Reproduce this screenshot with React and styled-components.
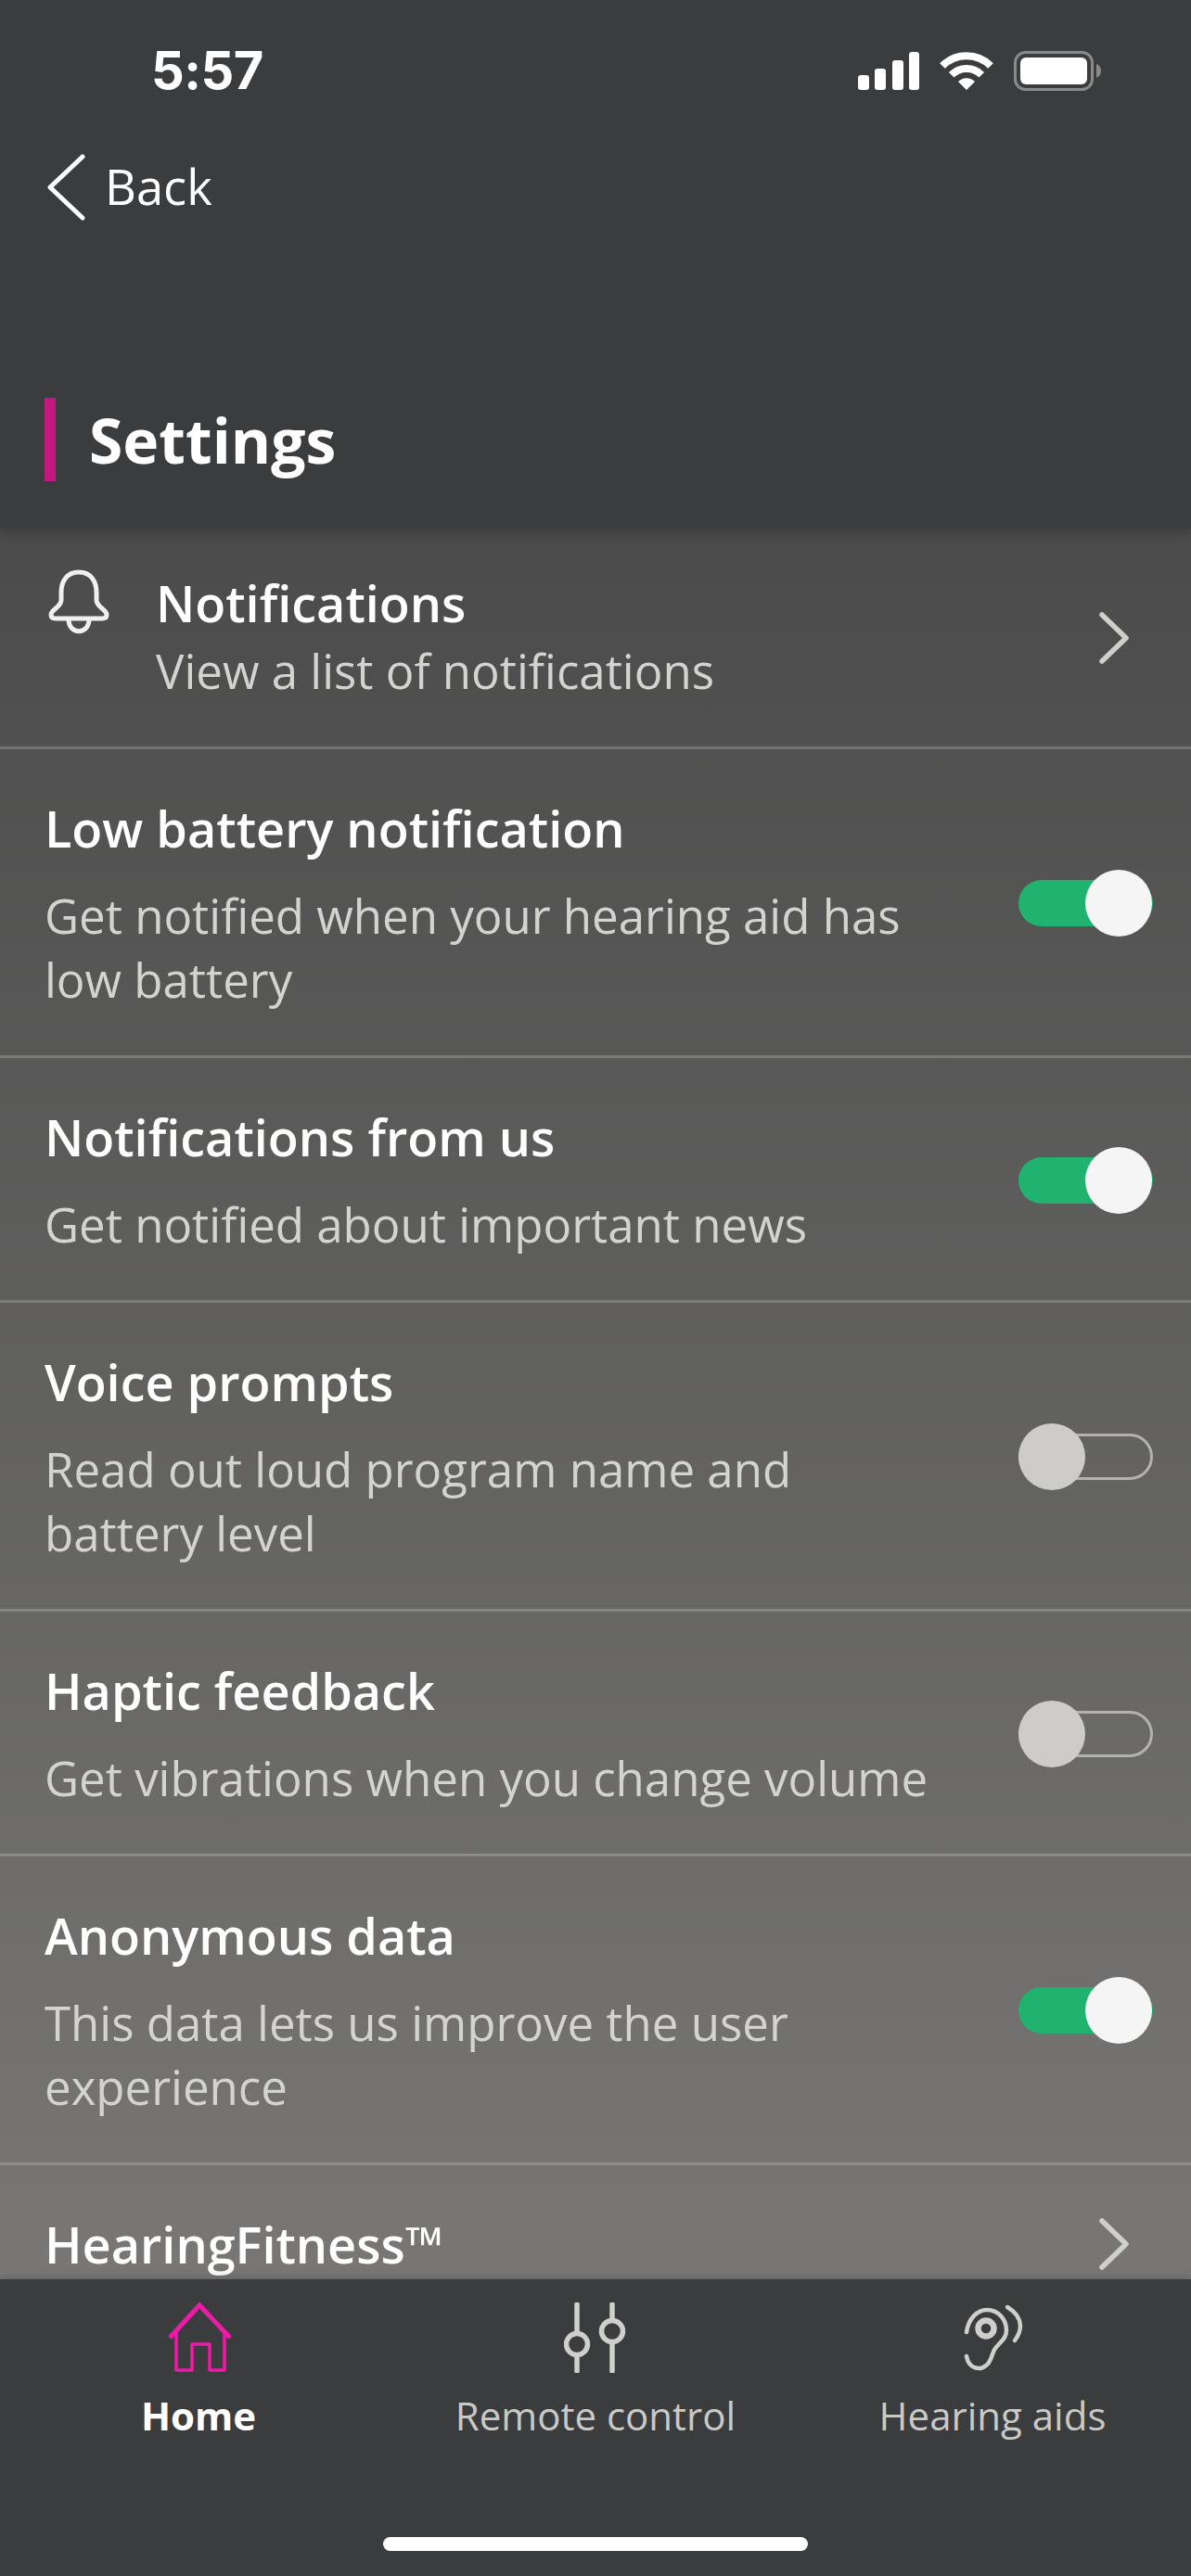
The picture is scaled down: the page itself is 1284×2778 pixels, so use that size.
import React from 'react'
import styled, { createGlobalStyle } from 'styled-components'

const Global = createGlobalStyle`
  html, body { margin: 0; padding: 0; background: #3b3c3e; }
  * { box-sizing: border-box; }
`

const Screen = styled.div`
  width: 1284px;
  height: 2778px;
  display: flex;
  flex-direction: column;
  overflow: hidden;
  font-family: "Open Sans", sans-serif;
  color: #fff;
  background: #3b3c3e;
`

const Header = styled.header`
  height: 570px;
  flex-shrink: 0;
  position: relative;
  z-index: 2;
  background: #3b3c3e;
  box-shadow: 0 3px 10px rgba(40, 40, 40, 0.45);
`

const StatusBar = styled.div`
  height: 152px;
  display: flex;
  align-items: center;
  justify-content: space-between;
  padding: 0 97px 0 163px;
`

const Time = styled.span`
  font-family: Inter, "Liberation Sans", sans-serif;
  font-weight: 700;
  font-size: 56px;
  letter-spacing: -0.5px;
`

const StatusIcons = styled.div`
  display: flex;
  align-items: center;
  gap: 22px;
  svg { display: block; }
`

const BackRow = styled.div`
  height: 100px;
  display: flex;
  align-items: center;
  gap: 21px;
  padding-left: 51px;
  font-size: 52.5px;
`

const BackLabel = styled.span`
  padding-bottom: 3px;
`

const TitleRow = styled.div`
  margin: 177px 0 0 48px;
  height: 90px;
  display: flex;
  align-items: center;
  padding-left: 36px;
  border-left: 12px solid #c4177f;
  font-size: 66px;
  font-weight: 700;
`

const List = styled.main`
  flex: 1;
  min-height: 0;
  overflow: hidden;
  background: linear-gradient(180deg, #4b4b4b 0%, #787775 100%);
`

const Row = styled.section`
  display: flex;
  align-items: center;
  padding: ${(p) => (p.$compact ? '48px 41px 47px 40px' : '53px 41px 47px 48px')};
  border-bottom: 3px solid rgba(255, 255, 255, 0.2);
`

const LeadIcon = styled.svg`
  flex-shrink: 0;
  align-self: flex-start;
  margin: -13px 38px 0 0;
`

const RowText = styled.div`
  flex: 1;
  min-width: 0;
`

const Title = styled.div`
  font-size: 54px;
  line-height: 64px;
  font-weight: 600;
  color: #fff;
`

const Sub = styled.div`
  max-width: 960px;
  margin-top: ${(p) => (p.$tight ? '7px' : '28px')};
  font-size: 51px;
  line-height: 69px;
  color: #d3d3d0;
`

const Chevron = styled.svg`
  flex-shrink: 0;
  margin-right: 26px;
`

const Track = styled.div`
  width: 145px;
  height: 50px;
  flex-shrink: 0;
  margin-bottom: 4px;
  display: flex;
  align-items: center;
  justify-content: ${(p) => (p.$on ? 'flex-end' : 'flex-start')};
  border-radius: 25px;
  background: ${(p) => (p.$on ? '#1fb36f' : 'transparent')};
  border: ${(p) => (p.$on ? 'none' : '3px solid #b3b2b0')};
`

const Knob = styled.div`
  width: 72px;
  height: 72px;
  flex-shrink: 0;
  border-radius: 50%;
  margin: ${(p) => (p.$on ? '0 1px 0 0' : '0 0 0 -3px')};
  background: ${(p) => (p.$on ? '#f5f5f5' : '#cdccc8')};
`

const TabBar = styled.nav`
  height: 320px;
  flex-shrink: 0;
  position: relative;
  z-index: 2;
  display: flex;
  flex-direction: column;
  background: #3b3c3e;
  box-shadow: 0 -2px 8px rgba(60, 60, 60, 0.35);
`

const Tabs = styled.div`
  display: grid;
  grid-template-columns: repeat(3, 1fr);
  padding-top: 24px;
`

const Tab = styled.div`
  display: flex;
  flex-direction: column;
  align-items: center;
  svg { display: block; flex-shrink: 0; }
`

const TabIconBox = styled.div`
  height: 78px;
  display: flex;
  align-items: center;
`

const TabLabel = styled.div`
  margin-top: 20px;
  font-size: 42px;
  line-height: 50px;
  font-weight: ${(p) => (p.$active ? 700 : 400)};
  color: ${(p) => (p.$active ? '#fff' : '#c9c9c6')};
`

const HomeBar = styled.div`
  width: 458px;
  height: 15px;
  margin: 106px auto 0;
  border-radius: 8px;
  background: #fff;
`

const Signal = () => (
  <svg width="66" height="41" viewBox="0 0 66 41" fill="#fff">
    <rect x="0" y="25" width="12" height="16" rx="3" />
    <rect x="18" y="18" width="12" height="23" rx="3" />
    <rect x="37" y="9" width="12" height="32" rx="3" />
    <rect x="55" y="0" width="11" height="41" rx="3" />
  </svg>
)

const Wifi = () => (
  <svg width="58" height="41" viewBox="0 0 58 41" fill="none" stroke="#fff" strokeWidth="8">
    <path d="M3 15 A37 37 0 0 1 55 15" />
    <path d="M12.7 24.7 A23 23 0 0 1 45.3 24.7" />
    <path d="M29 41 L20 32 A12.5 12.5 0 0 1 38 32 Z" fill="#fff" stroke="none" />
  </svg>
)

const Battery = () => (
  <svg width="94" height="43" viewBox="0 0 94 43">
    <rect x="1.5" y="1.5" width="83" height="40" rx="11" fill="none" stroke="#8a8a8a" strokeWidth="3" />
    <rect x="7" y="7" width="72" height="29" rx="6" fill="#fff" />
    <path d="M89 14 C92 15 94 18 94 21.5 C94 25 92 28 89 29 Z" fill="#8a8a8a" />
  </svg>
)

const BackArrow = () => (
  <svg width="41" height="72" viewBox="0 0 41 72" fill="none" stroke="#fff" strokeWidth="5" strokeLinecap="round" strokeLinejoin="round">
    <path d="M38 3 L3 36 L38 69" />
  </svg>
)

const Bell = () => (
  <LeadIcon width="90" height="90" viewBox="0 0 90 90" fill="none" stroke="#f0f0f0" strokeWidth="5" strokeLinejoin="round">
    <path d="M45 12 C32 12 26 22 26 34 V42 C26 50 15 52 15 58 C15 61 17 62 20 62 H70 C73 62 75 61 75 58 C75 52 64 50 64 42 V34 C64 22 58 12 45 12 Z" />
    <path d="M34 63 C34 80 56 80 56 63" />
  </LeadIcon>
)

const ChevronRight = () => (
  <Chevron width="32" height="56" viewBox="0 0 32 56" fill="none" stroke="#cfcfcc" strokeWidth="5.5" strokeLinecap="round" strokeLinejoin="round">
    <path d="M3 3 L29 28 L3 53" />
  </Chevron>
)

const HomeIcon = () => (
  <svg width="76" height="78" viewBox="0 0 76 78" fill="none" stroke="#ec1ba6">
    <path d="M7 39 L39 4 L72 39" strokeWidth="5" strokeLinejoin="miter" />
    <path d="M14 33 V74 H31 V46 H50 V74 H66 V33" strokeWidth="3.5" strokeLinejoin="round" />
  </svg>
)

const SlidersIcon = () => (
  <svg width="68" height="76" viewBox="0 0 68 76" fill="none" stroke="#cfcfcc" strokeWidth="5.5" strokeLinecap="round">
    <path d="M14 2 V31 M14 59 V74" />
    <circle cx="14" cy="45" r="11.5" />
    <path d="M52 2 V17 M52 45 V74" />
    <circle cx="52" cy="31" r="11.5" />
  </svg>
)

const EarIcon = () => (
  <svg width="80" height="90" viewBox="0 0 80 90" fill="none" stroke="#cfcfcc" strokeWidth="4.5" strokeLinecap="round">
    <path d="M12 39 C14 24 24 15 34 15 C46 15 55 25 55 37 C55 47 47 50 42 58 C39 64 38 72 33 75 C26 81 14 78 12 65" />
    <path d="M56 12 C66 18 70 26 70 32 C70 38 67 44 64 48" />
    <circle cx="33" cy="35" r="8.5" strokeWidth="6.5" />
  </svg>
)

const settings = [
  { title: 'Low battery notification', sub: 'Get notified when your hearing aid has low battery', on: true },
  { title: 'Notifications from us', sub: 'Get notified about important news', on: true },
  { title: 'Voice prompts', sub: 'Read out loud program name and battery level', on: false },
  { title: 'Haptic feedback', sub: 'Get vibrations when you change volume', on: false },
  { title: 'Anonymous data', sub: 'This data lets us improve the user experience', on: true },
]

export default function App() {
  return (
    <Screen>
      <Global />
      <Header>
        <StatusBar>
          <Time>5:57</Time>
          <StatusIcons>
            <Signal />
            <Wifi />
            <Battery />
          </StatusIcons>
        </StatusBar>
        <BackRow>
          <BackArrow />
          <BackLabel>Back</BackLabel>
        </BackRow>
        <TitleRow>Settings</TitleRow>
      </Header>

      <List>
        <Row $compact>
          <Bell />
          <RowText>
            <Title>Notifications</Title>
            <Sub $tight>View a list of notifications</Sub>
          </RowText>
          <ChevronRight />
        </Row>
        {settings.map((s) => (
          <Row key={s.title}>
            <RowText>
              <Title>{s.title}</Title>
              <Sub>{s.sub}</Sub>
            </RowText>
            <Track $on={s.on}>
              <Knob $on={s.on} />
            </Track>
          </Row>
        ))}
        <Row>
          <RowText>
            <Title>HearingFitness™</Title>
          </RowText>
          <ChevronRight />
        </Row>
      </List>

      <TabBar>
        <Tabs>
          <Tab>
            <TabIconBox><HomeIcon /></TabIconBox>
            <TabLabel $active>Home</TabLabel>
          </Tab>
          <Tab>
            <TabIconBox><SlidersIcon /></TabIconBox>
            <TabLabel>Remote control</TabLabel>
          </Tab>
          <Tab>
            <TabIconBox><EarIcon /></TabIconBox>
            <TabLabel>Hearing aids</TabLabel>
          </Tab>
        </Tabs>
        <HomeBar />
      </TabBar>
    </Screen>
  )
}
